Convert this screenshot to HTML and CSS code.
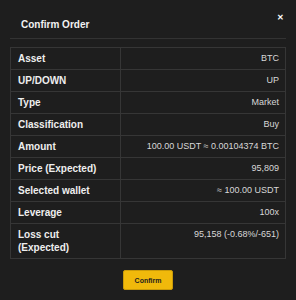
FILE: index.html
```html
<!DOCTYPE html>
<html>
<head>
    <title>Confirm Order</title>
    <link rel="stylesheet" href="styles.css">
</head>
<body>
    <div class="modal">
        <div class="modal-header">
            <h2>Confirm Order</h2>
            <span class="close">&#x2715;</span>
        </div>

        <table class="order-table">
            <tr><th>Asset</th><td>BTC</td></tr>
            <tr><th>UP/DOWN</th><td>UP</td></tr>
            <tr><th>Type</th><td>Market</td></tr>
            <tr><th>Classification</th><td>Buy</td></tr>
            <tr><th>Amount</th><td>100.00 USDT ≈ 0.00104374 BTC</td></tr>
            <tr><th>Price (Expected)</th><td>95,809</td></tr>
            <tr><th>Selected wallet</th><td>≈ 100.00 USDT</td></tr>
            <tr><th>Leverage</th><td>100x</td></tr>
            <tr><th>Loss cut<br>(Expected)</th><td>95,158 (-0.68%/-651)</td></tr>
        </table>

        <div class="modal-footer">
            <button class="confirm-button">Confirm</button>
        </div>
    </div>
</body>
</html>
```

FILE: styles.css
```css
body {
    margin: 0;
    background-color: #1e1e1e;
    font-family: "Liberation Sans", Arial, sans-serif;
    color: #e8e8e8;
}

.modal {
    padding: 0 10px;
}

.modal-header {
    display: flex;
    justify-content: space-between;
    align-items: flex-start;
    height: 38px;
    padding: 0 2px 0 11px;
    border-bottom: 1px solid #333;
    margin-bottom: 8px;
}

.modal-header h2 {
    margin: 18px 0 0 0;
    font-size: 10px;
    line-height: 13px;
    font-weight: bold;
    color: #f2f2f2;
}

.close {
    margin-top: 12px;
    font-size: 8px;
    font-weight: bold;
    line-height: 11px;
    color: #fff;
}

.order-table {
    width: 100%;
    border-collapse: collapse;
    border: 1px solid #363636;
}

.order-table th,
.order-table td {
    border: 1px solid #363636;
    padding: 4px 6px 4px 7px;
    line-height: 13px;
    vertical-align: top;
}

.order-table th {
    width: 96px;
    text-align: left;
    font-size: 10px;
    font-weight: bold;
    color: #eee;
}

.order-table td {
    text-align: right;
    font-size: 9px;
    color: #d8d8d8;
}

.modal-footer {
    display: flex;
    justify-content: center;
    margin-top: 11px;
}

.confirm-button {
    width: 50px;
    height: 20px;
    padding: 0;
    font-family: "Liberation Sans", Arial, sans-serif;
    font-size: 7px;
    font-weight: bold;
    color: #1e1e1e;
    background-color: #f0b90b;
    border: 1px solid #c99a08;
    border-radius: 2px;
    cursor: pointer;
}
```
